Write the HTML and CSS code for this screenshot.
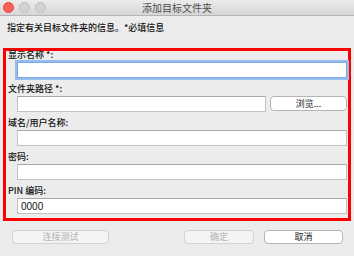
FILE: index.html
```html
<!DOCTYPE html>
<html lang="zh-CN">
<head>
    <meta charset="UTF-8">
    <title>添加目标文件夹</title>
    <link rel="stylesheet" href="styles.css">
</head>
<body>
    <div class="window">
        <div class="title-bar">
            <div class="lights">
                <span class="light light-close"></span>
                <span class="light"></span>
                <span class="light"></span>
            </div>
            <div class="title">添加目标文件夹</div>
            <div></div>
        </div>

        <p class="intro">指定有关目标文件夹的信息。*必填信息</p>

        <div class="form-box">
            <div class="field">
                <label for="displayName">显示名称 *:</label>
                <input type="text" id="displayName" class="focused">
            </div>
            <div class="field">
                <label for="folderPath">文件夹路径 *:</label>
                <div class="path-row">
                    <input type="text" id="folderPath">
                    <button class="btn btn-browse">浏览...</button>
                </div>
            </div>
            <div class="field">
                <label for="userName">域名/用户名称:</label>
                <input type="text" id="userName">
            </div>
            <div class="field">
                <label for="password">密码:</label>
                <input type="password" id="password">
            </div>
            <div class="field">
                <label for="pin">PIN 编码:</label>
                <input type="text" id="pin" value="0000">
            </div>
        </div>

        <div class="footer">
            <button class="btn btn-test" disabled>连接测试</button>
            <div class="spacer"></div>
            <button class="btn btn-ok" disabled>确定</button>
            <button class="btn btn-cancel">取消</button>
        </div>
    </div>
</body>
</html>
```

FILE: styles.css
```css
body {
    margin: 0;
    font-family: 'Noto Sans CJK SC', 'Liberation Sans', sans-serif;
    color: #111;
    background: #ececec;
}

.window {
    width: 354px;
    height: 256px;
    display: flex;
    flex-direction: column;
    background: #ececec;
    overflow: hidden;
}

/* Title bar */
.title-bar {
    height: 15px;
    display: grid;
    grid-template-columns: 1fr auto 1fr;
    align-items: center;
    background: linear-gradient(#ebebeb, #d6d6d6);
    border-bottom: 1px solid #b4b4b4;
}

.lights {
    display: flex;
    gap: 5px;
    padding-left: 3px;
    margin-top: -1px;
}

.light {
    width: 9px;
    height: 9px;
    border-radius: 50%;
    background: #d2d2d2;
    border: 1px solid #c0c0c0;
}

.light-close {
    background: #fc5f57;
    border-color: #e0443e;
}

.title {
    font-size: 10px;
    line-height: 15px;
    color: #4c4c4c;
}

.intro {
    margin: 0;
    padding: 5px 7px 0;
    font-size: 9px;
    line-height: 14px;
    font-weight: 500;
}

/* Red highlighted form area */
.form-box {
    margin: 13px 3px 0;
    border: 3px solid #f00;
    padding: 0 1px 4px 2px;
    display: flex;
    flex-direction: column;
    gap: 4px;
}

.field:first-child {
    margin-top: -3px;
}

.field label {
    display: block;
    font-size: 9px;
    line-height: 14px;
    font-weight: 500;
}

.field input {
    display: block;
    box-sizing: border-box;
    width: calc(100% - 9px);
    height: 16px;
    margin-left: 9px;
    padding: 0 3px;
    border: 1px solid #c2c2c2;
    border-top-color: #a9a9a9;
    background: #fff;
    font-family: 'Liberation Sans', sans-serif;
    font-size: 10px;
    color: #111;
    outline: none;
}

.field input.focused {
    border-color: #7aa9e3;
    box-shadow: 0 0 0 2px #97bdec;
}

.path-row {
    display: flex;
    gap: 4px;
    align-items: flex-start;
}

.path-row input {
    flex: 1;
    width: auto;
}

/* Buttons */
.btn {
    box-sizing: border-box;
    height: 14px;
    padding: 0;
    border: 1px solid #b4b4b4;
    border-radius: 4px;
    background: #fff;
    font-family: 'Noto Sans CJK SC', sans-serif;
    font-size: 9px;
    line-height: 12px;
    color: #222;
}

.btn:disabled {
    background: #f4f4f4;
    border-color: #d2d2d2;
    color: #b2b2b2;
}

.btn-browse {
    width: 77px;
    height: 15px;
}

.footer {
    display: flex;
    gap: 10px;
    margin-top: 9px;
    padding: 0 11px 0 12px;
}

.spacer {
    flex: 1;
}

.btn-test { width: 97px; }
.btn-ok { width: 70px; }
.btn-cancel { width: 79px; }
```
